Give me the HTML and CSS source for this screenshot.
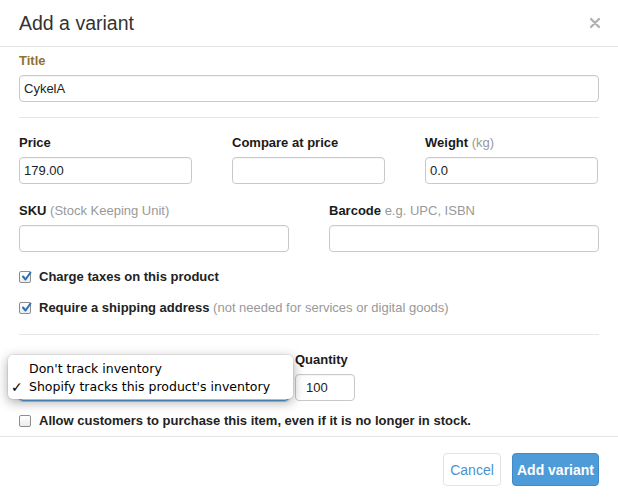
FILE: index.html
```html
<!DOCTYPE html>
<html lang="en">
<head>
    <meta charset="UTF-8">
    <title>Add a variant</title>
    <link rel="stylesheet" href="styles.css">
</head>
<body>
    <div class="modal">
        <div class="modal-header">
            <h2>Add a variant</h2>
            <span class="close">
                <svg width="10" height="10" viewBox="0 0 10 10"><path d="M1 1L9 9M9 1L1 9" stroke="#b3b3b3" stroke-width="2.4" stroke-linecap="round"/></svg>
            </span>
        </div>

        <div class="modal-body">
            <div class="field">
                <label class="title-label">Title</label>
                <input type="text" value="CykelA">
            </div>

            <hr>

            <div class="row row-three">
                <div class="field">
                    <label>Price</label>
                    <input type="text" value="179.00">
                </div>
                <div class="field">
                    <label>Compare at price</label>
                    <input type="text">
                </div>
                <div class="field">
                    <label>Weight <span class="hint">(kg)</span></label>
                    <input type="text" value="0.0" class="nudge">
                </div>
            </div>

            <div class="row row-two">
                <div class="field">
                    <label>SKU <span class="hint">(Stock Keeping Unit)</span></label>
                    <input type="text">
                </div>
                <div class="field">
                    <label>Barcode <span class="hint">e.g. UPC, ISBN</span></label>
                    <input type="text">
                </div>
            </div>

            <div class="check first">
                <span class="box checked">
                    <svg width="11" height="11" viewBox="0 0 11 11"><path d="M2 5.5L4.5 8.5L9.5 1.5" fill="none" stroke="#2f6fb5" stroke-width="2" stroke-linecap="round" stroke-linejoin="round"/></svg>
                </span>
                <span class="check-text">Charge taxes on this product</span>
            </div>
            <div class="check second">
                <span class="box checked">
                    <svg width="11" height="11" viewBox="0 0 11 11"><path d="M2 5.5L4.5 8.5L9.5 1.5" fill="none" stroke="#2f6fb5" stroke-width="2" stroke-linecap="round" stroke-linejoin="round"/></svg>
                </span>
                <span class="check-text">Require a shipping address <span class="hint">(not needed for services or digital goods)</span></span>
            </div>

            <hr class="lower">

            <div class="inventory">
                <div class="field policy">
                    <label class="faded">Inventory policy</label>
                    <div class="select-box"></div>
                </div>
                <div class="field qty">
                    <label>Quantity</label>
                    <input type="text" value="100">
                </div>

                <div class="dropdown">
                    <div class="option">Don't track inventory</div>
                    <div class="option selected"><span class="tick">✓</span>Shopify tracks this product's inventory</div>
                </div>
            </div>

            <div class="check allow">
                <span class="box"></span>
                <span class="check-text">Allow customers to purchase this item, even if it is no longer in stock.</span>
            </div>
        </div>

        <div class="modal-footer">
            <button class="btn btn-cancel">Cancel</button>
            <button class="btn btn-primary">Add variant</button>
        </div>
    </div>
</body>
</html>
```

FILE: styles.css
```css
* {
    margin: 0;
    padding: 0;
    box-sizing: border-box;
}

body {
    font-family: 'Liberation Sans', Arial, sans-serif;
    font-size: 13px;
    color: #222;
    background: #fff;
}

.modal {
    width: 618px;
    height: 501px;
    background: #fff;
}

.modal-header {
    display: flex;
    justify-content: space-between;
    align-items: center;
    height: 47px;
    padding: 0 18px 1px 19px;
    border-bottom: 1px solid #e5e5e5;
}

.modal-header h2 {
    font-size: 19.5px;
    font-weight: normal;
    color: #333;
    line-height: 24px;
}

.close {
    display: flex;
    margin-top: 1px;
}

.modal-body {
    padding: 5px 19px 5px 19px;
}

.field label {
    display: block;
    font-weight: bold;
    line-height: 18px;
    margin-bottom: 5px;
    color: #1a1a1a;
    white-space: nowrap;
}

.field .title-label {
    color: #8f7332;
}

.hint {
    font-weight: normal;
    color: #999;
}

input[type="text"] {
    display: block;
    width: 100%;
    height: 27px;
    padding: 0 6px 0 4px;
    border: 1px solid #c9c9c9;
    border-radius: 4px;
    font-family: inherit;
    font-size: 13px;
    color: #222;
    box-shadow: inset 0 1px 1px rgba(0,0,0,0.04);
    outline: none;
}

input.nudge {
    margin-top: 1px;
}

hr {
    border: none;
    border-top: 1px solid #e6e6e6;
    margin: 15px 0 16px 0;
}

hr.lower {
    margin: 16px 0 16px 0;
}

.row {
    display: grid;
    column-gap: 40px;
}

.row-three {
    grid-template-columns: 173px 153px 173px;
}

.row-two {
    grid-template-columns: 270px 270px;
    margin-top: 18px;
}

.check {
    display: flex;
    align-items: center;
    line-height: 20px;
    font-weight: bold;
}

.check.first {
    margin-top: 15px;
}

.check.second {
    margin-top: 11px;
}

.check.allow {
    margin-top: 10px;
}

.box {
    display: flex;
    align-items: center;
    justify-content: center;
    width: 12px;
    height: 12px;
    margin-right: 8px;
    border: 1px solid #8d8d8d;
    border-radius: 2px;
    background: linear-gradient(#fff, #ececec);
}

.box svg {
    margin: -2px -2px 0 0;
}

.inventory {
    position: relative;
    display: flex;
    gap: 6px;
}

.policy {
    width: 270px;
}

.faded {
    color: #aaa;
}

.select-box {
    height: 27px;
    border: 1px solid #5b9dd9;
    border-radius: 4px;
    box-shadow: 0 0 0 1px rgba(91,157,217,0.5);
}

.qty {
    width: 60px;
}

.qty input[type="text"] {
    padding-left: 10px;
}

.dropdown {
    position: absolute;
    left: -11px;
    top: 4px;
    width: 285px;
    padding: 5px 0 3px 0;
    background: #fff;
    border-radius: 5px;
    box-shadow: 0 3px 12px rgba(0,0,0,0.35), 0 0 0 1px rgba(0,0,0,0.06);
    font-family: 'DejaVu Sans', sans-serif;
    font-size: 12.5px;
    color: #000;
}

.option {
    position: relative;
    line-height: 18px;
    padding-left: 21px;
}

.tick {
    position: absolute;
    left: 3px;
    top: 0;
    font-size: 14px;
    font-weight: bold;
}

.modal-footer {
    display: flex;
    justify-content: flex-end;
    gap: 11px;
    padding: 16px 19px 14px 19px;
    border-top: 1px solid #e5e5e5;
}

.btn {
    height: 33px;
    border-radius: 4px;
    font-family: inherit;
    font-size: 14px;
}

.btn-cancel {
    width: 58px;
    background: #fff;
    border: 1px solid #e3e3e3;
    color: #4a93d1;
}

.btn-primary {
    width: 87px;
    background: #4d9bd8;
    border: 1px solid #3f8bc8;
    color: #fff;
    font-weight: bold;
}
```
